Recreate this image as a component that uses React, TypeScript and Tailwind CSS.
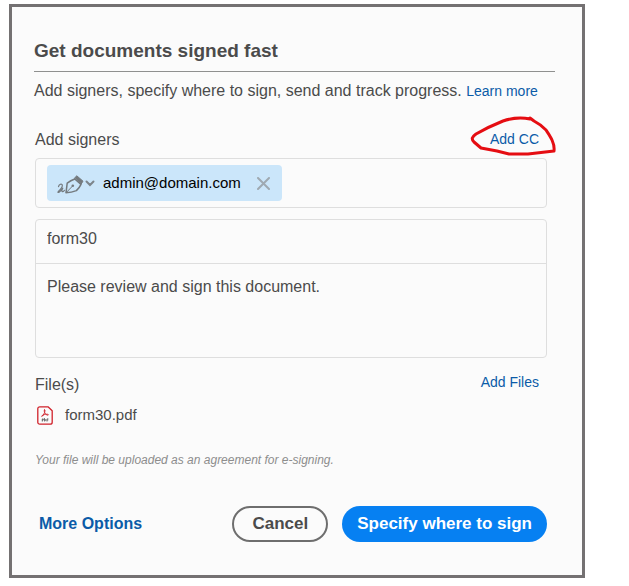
import { useState } from 'react';

const PenIcon = () => (
  <svg width="28" height="21" viewBox="0 0 28 21" fill="none" stroke="#747a7e" strokeLinecap="round" strokeLinejoin="round" aria-hidden="true">
    <path strokeWidth="1.2" d="M1.500 13.600C2 11.300 4.800 10.300 5.300 12c.4 1.800-1.700 4.300-3.700 6.100-.7.700-1 1.500-.2 1.400 1.300-.2 3.300-2.800 4.400-4.300-.9 1.600-1.300 3.300-.4 3.500.6.100 1.300-.5 2-1.400" />
    <path strokeWidth="1.500" d="M9 19.800l1.200-9.600c2.300-1.800 4.800-3.200 7.600-4.200l6.200 5.400c-1 2.300-2.600 4.400-4.600 6.200-3.400 1.200-6.900 1.900-10.400 2.200z" />
    <path strokeWidth="1" d="M9.400 19.400l6-6.200" />
    <circle cx="15.800" cy="12.700" r="1.300" fill="#747a7e" stroke="none" />
    <path fill="#747a7e" strokeWidth="1" d="M17.600 5L19.800 2.800l6.200 5.400-1.700 2.600z" />
  </svg>
);

const PdfIcon = () => (
  <svg width="16" height="19" viewBox="0 0 16 19" fill="none" stroke="#d0222b" strokeLinecap="round" strokeLinejoin="round" aria-hidden="true">
    <path strokeWidth="1.3" d="M2.800.8h8.200l4.200 4v11.400c0 1.200-.8 2-2 2H2.800c-1.200 0-2-.8-2-2V2.800c0-1.200.8-2 2-2z" />
    <path strokeWidth=".9" d="M7.600 3.800c-.9 0-.4 2.300.4 3.400.7 1.100 1.800 1.900 2.800 2 1 0 .8-1-.6-1-2 0-4 .6-5.200 1.400-1 .8-.2 1.300.6.400.8-1 1.900-2.900 2.300-4.600.2-.9.100-1.600-.3-1.600z" />
    <path stroke="#555" strokeWidth=".8" d="M5.300 15.200v-2.300h1v1.200h-1M7.500 12.900v2.300c1.600 0 1.600-2.300 0-2.300zM10 15.200v-2.300h1M10 14h.9" />
  </svg>
);

const App = () => {
  const [signers, setSigners] = useState(['admin@domain.com']);
  const [title, setTitle] = useState('form30');
  const [message, setMessage] = useState('Please review and sign this document.');

  const removeSigner = (email: string) => {
    setSigners(signers.filter((signer) => signer !== email));
  };

  return (
    <main className="bg-white pt-1 pr-11 pb-2 pl-[9px] font-['Liberation_Sans',Arial,sans-serif] text-base leading-[22px] text-[#4b4b4b]">
      <form
        onSubmit={(e) => e.preventDefault()}
        className="border-3 border-[#747172] bg-[#fbfbfb] pt-[30px] pr-[27px] pb-[33px] pl-[22px]"
      >
        <h1 className="border-b border-[#8f908f] pb-1.5 text-[19px] leading-7 font-bold">
          Get documents signed fast
        </h1>
        <p className="mt-2">
          Add signers, specify where to sign, send and track progress.
          {' '}
          <a href="#learn" className="text-sm text-[#0b5ba8]">Learn more</a>
        </p>

        <div className="mr-2 ml-px">
          <div className="mt-[27px] flex items-start justify-between">
            <label htmlFor="signers">Add signers</label>
            <div className="relative mr-2 flex">
              <button type="button" className="text-sm leading-5 text-[#0b5ba8]">Add CC</button>
              <svg className="pointer-events-none absolute -top-3.5 -left-5" width="88" height="42" viewBox="0 0 88 42" fill="none" aria-hidden="true">
                <path
                  d="M60 4C50 2 42 3 33 6C23 10 13 15 6 19C2 22 1 24 4 27L11 33L27 36L39 39H58L84 36C85 28 80 21 76 15C72 11 68 8 64 6L60 3"
                  stroke="#e50d12"
                  strokeWidth="3"
                  strokeLinecap="round"
                  strokeLinejoin="round"
                />
              </svg>
            </div>
          </div>

          <div className="mt-[7px] flex h-[50px] items-center rounded border border-[#dedede] px-[11px]">
            {signers.map((email) => (
              <div key={email} className="flex h-9 shrink-0 items-center rounded bg-[#cbe6fa] pr-3 pl-2.5 text-black">
                <button type="button" aria-label="Signer role" className="flex items-center">
                  <PenIcon />
                  <svg width="10" height="7" viewBox="0 0 10 7" fill="none" stroke="#7d858b" strokeWidth="2" strokeLinecap="round" aria-hidden="true">
                    <path d="M1.500 1.500L5 5l3.500-3.500" />
                  </svg>
                </button>
                <span className="ml-2 text-[15px]">{email}</span>
                <button type="button" aria-label={`Remove ${email}`} onClick={() => removeSigner(email)} className="ml-4">
                  <svg width="13" height="13" viewBox="0 0 13 13" fill="none" stroke="#9fa9b1" strokeWidth="2" strokeLinecap="round" aria-hidden="true">
                    <path d="M1 1l11 11M12 1L1 12" />
                  </svg>
                </button>
              </div>
            ))}
            <input id="signers" type="email" className="ml-2 min-w-0 flex-1 outline-none" />
          </div>

          <div className="mt-[11px] rounded border border-[#dedede]">
            <input
              type="text"
              aria-label="Agreement name"
              value={title}
              onChange={(e) => setTitle(e.target.value)}
              className="block h-11 w-full border-b border-[#dedede] px-[11px] pb-1.5 outline-none"
            />
            <textarea
              aria-label="Message"
              value={message}
              onChange={(e) => setMessage(e.target.value)}
              className="block h-[93px] w-full resize-none px-[11px] py-3 outline-none"
            />
          </div>

          <div className="mt-4 flex items-start justify-between">
            <h2>File(s)</h2>
            <button type="button" className="mr-2 text-sm leading-4 text-[#0b5ba8]">Add Files</button>
          </div>
          <div className="mt-2 flex items-center gap-3 pl-0.5">
            <PdfIcon />
            <span className="text-[15px]">form30.pdf</span>
          </div>
          <p className="mt-6 text-xs leading-5 text-[#8d8d8d] italic">
            Your file will be uploaded as an agreement for e-signing.
          </p>

          <div className="mt-9 flex items-center font-bold">
            <button type="button" className="ml-1 text-[#0b5ba8]">More Options</button>
            <button
              type="button"
              className="ml-auto h-9 rounded-full border-2 border-[#6e6e6e] px-[18px] text-[17px]"
            >
              Cancel
            </button>
            <button type="submit" className="ml-3.5 h-9 rounded-full bg-[#0680f2] px-[15px] text-[17px] text-white">
              Specify where to sign
            </button>
          </div>
        </div>
      </form>
    </main>
  );
};

export default App;
